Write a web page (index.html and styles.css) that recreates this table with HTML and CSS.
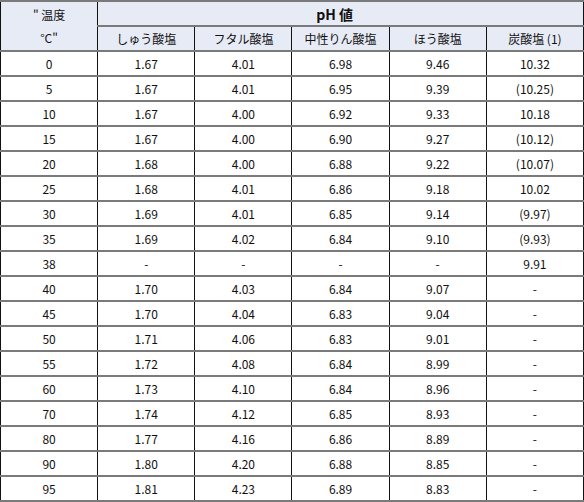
FILE: index.html
```html
<!DOCTYPE html>
<html lang="ja">
<head>
<meta charset="utf-8">
<link rel="stylesheet" href="styles.css">
</head>
<body>
<table class="ph">
  <colgroup>
    <col class="c"><col class="c"><col class="c"><col class="c"><col class="c"><col class="c">
  </colgroup>
  <thead>
    <tr>
      <th rowspan="2" class="temp">" 温度<br>°C"</th>
      <th colspan="5" class="title">pH 値</th>
    </tr>
    <tr>
      <th>しゅう酸塩</th>
      <th>フタル酸塩</th>
      <th>中性りん酸塩</th>
      <th>ほう酸塩</th>
      <th>炭酸塩 (1)</th>
    </tr>
  </thead>
  <tbody>
    <tr><td>0</td><td>1.67</td><td>4.01</td><td>6.98</td><td>9.46</td><td>10.32</td></tr>
    <tr><td>5</td><td>1.67</td><td>4.01</td><td>6.95</td><td>9.39</td><td>(10.25)</td></tr>
    <tr><td>10</td><td>1.67</td><td>4.00</td><td>6.92</td><td>9.33</td><td>10.18</td></tr>
    <tr><td>15</td><td>1.67</td><td>4.00</td><td>6.90</td><td>9.27</td><td>(10.12)</td></tr>
    <tr><td>20</td><td>1.68</td><td>4.00</td><td>6.88</td><td>9.22</td><td>(10.07)</td></tr>
    <tr><td>25</td><td>1.68</td><td>4.01</td><td>6.86</td><td>9.18</td><td>10.02</td></tr>
    <tr><td>30</td><td>1.69</td><td>4.01</td><td>6.85</td><td>9.14</td><td>(9.97)</td></tr>
    <tr><td>35</td><td>1.69</td><td>4.02</td><td>6.84</td><td>9.10</td><td>(9.93)</td></tr>
    <tr><td>38</td><td>-</td><td>-</td><td>-</td><td>-</td><td>9.91</td></tr>
    <tr><td>40</td><td>1.70</td><td>4.03</td><td>6.84</td><td>9.07</td><td>-</td></tr>
    <tr><td>45</td><td>1.70</td><td>4.04</td><td>6.83</td><td>9.04</td><td>-</td></tr>
    <tr><td>50</td><td>1.71</td><td>4.06</td><td>6.83</td><td>9.01</td><td>-</td></tr>
    <tr><td>55</td><td>1.72</td><td>4.08</td><td>6.84</td><td>8.99</td><td>-</td></tr>
    <tr><td>60</td><td>1.73</td><td>4.10</td><td>6.84</td><td>8.96</td><td>-</td></tr>
    <tr><td>70</td><td>1.74</td><td>4.12</td><td>6.85</td><td>8.93</td><td>-</td></tr>
    <tr><td>80</td><td>1.77</td><td>4.16</td><td>6.86</td><td>8.89</td><td>-</td></tr>
    <tr><td>90</td><td>1.80</td><td>4.20</td><td>6.88</td><td>8.85</td><td>-</td></tr>
    <tr><td>95</td><td>1.81</td><td>4.23</td><td>6.89</td><td>8.83</td><td>-</td></tr>
  </tbody>
</table>
</body>
</html>
```

FILE: styles.css
```css
html, body {
  margin: 0;
  padding: 0;
  background: #ffffff;
}
body {
  font-family: "Noto Sans CJK JP", "Noto Sans", sans-serif;
  font-size: 12px;
  color: #111111;
}
.ph {
  width: 584px;
  border-collapse: collapse;
  table-layout: fixed;
}
.ph th, .ph td {
  border-left: 1px solid #111111;
  border-right: 1px solid #111111;
  border-top: 2px solid #7a7a7a;
  border-bottom: 2px solid #7a7a7a;
  text-align: center;
  vertical-align: middle;
  padding: 0;
  height: 23px;
  line-height: 16px;
}
.ph th {
  background: #e7ebf6;
  font-weight: normal;
}
.ph th.title {
  font-weight: bold;
  font-size: 14px;
  padding-right: 12px;
}
.ph th.temp {
  line-height: 23px;
}
```
